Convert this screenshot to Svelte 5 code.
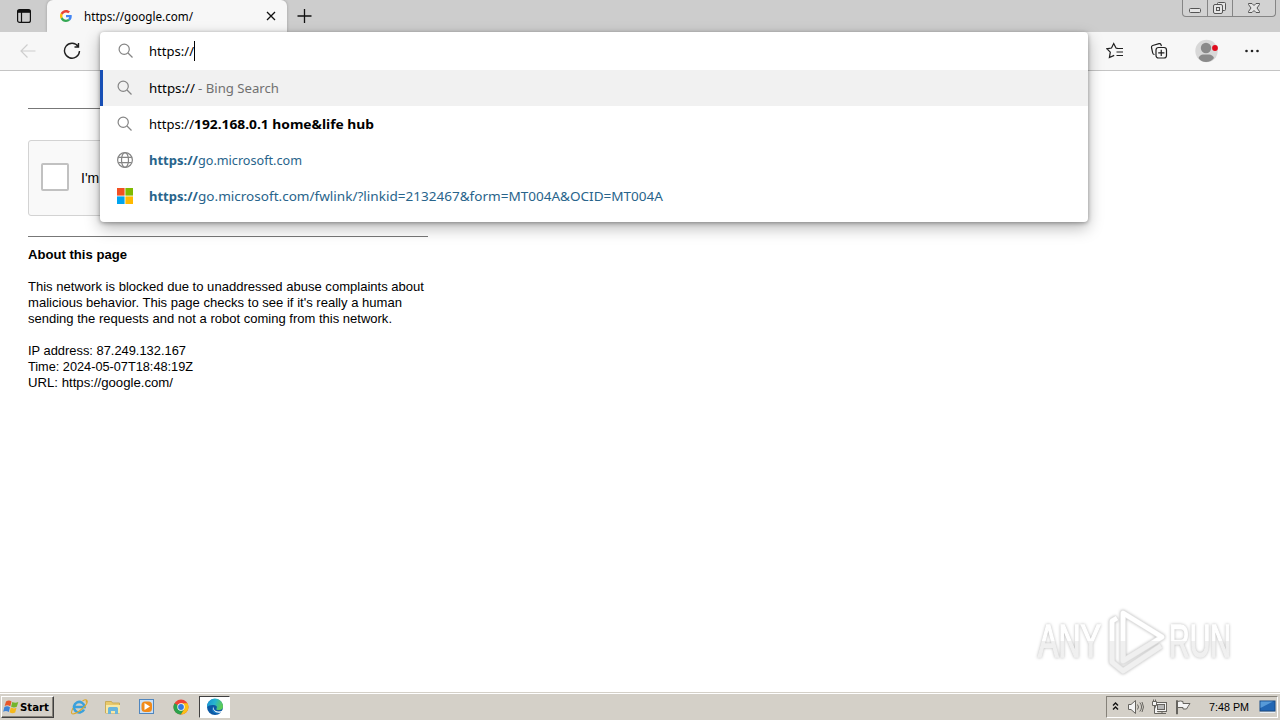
<script lang="ts">
	type Suggestion = {
		icon: 'search' | 'globe' | 'windows';
		kind: string;
		parts: { text: string; style: string; width: number }[];
	};

	const suggestions: Suggestion[] = [
		{
			icon: 'search',
			kind: 'selected',
			parts: [
				{ text: 'https://', style: 'plain', width: 46 },
				{ text: '- Bing Search', style: 'hint', width: 81 }
			]
		},
		{
			icon: 'search',
			kind: '',
			parts: [
				{ text: 'https://', style: 'plain', width: 45 },
				{ text: '192.168.0.1 home&life hub', style: 'strong', width: 180 }
			]
		},
		{
			icon: 'globe',
			kind: 'link',
			parts: [
				{ text: 'https://', style: 'strong', width: 49 },
				{ text: 'go.microsoft.com', style: 'plain', width: 104 }
			]
		},
		{
			icon: 'windows',
			kind: 'link',
			parts: [
				{ text: 'https://', style: 'strong', width: 49 },
				{
					text: 'go.microsoft.com/fwlink/?linkid=2132467&form=MT004A&OCID=MT004A',
					style: 'plain',
					width: 465
				}
			]
		}
	];
</script>

{#snippet label(text: string, width: number)}
	<svg class="label" {width} height="20">
		<text x="0" y="15" textLength={width} lengthAdjust="spacingAndGlyphs">{text}</text>
	</svg>
{/snippet}

{#snippet search()}
	<svg class="glyph" width="16" height="16" viewBox="0 0 16 16">
		<circle cx="6.2" cy="6.2" r="5.1" />
		<path d="m10 10 4.500 4.500" />
	</svg>
{/snippet}

<div class="screen">
	<header class="tabs">
		<svg class="tab-actions" width="16" height="16" viewBox="0 0 16 16">
			<rect x="1.6" y="1.6" width="12.8" height="12.8" rx="2" />
			<path d="M1.6 3.3h12.8" stroke-width="3" />
			<path d="M5.5 4v10" />
		</svg>
		<div class="tab">
			<svg width="12" height="12" viewBox="0 0 48 48">
				<path fill="#ea4335" d="M24 9.5c3.5 0 6.700 1.200 9.200 3.600l6.900-6.900C35.900 2.400 30.500 0 24 0 14.600 0 6.500 5.400 2.600 13.200l8 6.200C12.400 13.700 17.700 9.500 24 9.500z" />
				<path fill="#4285f4" d="M47 24.500c0-1.600-.2-3.100-.4-4.500H24v9h12.900c-.6 3-2.300 5.500-4.800 7.200l7.700 6C44.400 38 47 31.800 47 24.500z" />
				<path fill="#fbbc05" d="M10.500 28.600c-.5-1.500-.8-3-.8-4.600s.3-3.100.8-4.600l-8-6.200C.9 16.500 0 20.100 0 24s.9 7.500 2.600 10.800z" />
				<path fill="#34a853" d="M24 48c6.500 0 11.900-2.100 15.900-5.800l-7.700-6c-2.200 1.500-4.900 2.300-8.200 2.300-6.300 0-11.600-4.200-13.500-9.900l-8 6.200C6.500 42.600 14.600 48 24 48z" />
			</svg>
			<span class="tab-title">{@render label('https://google.com/', 109)}</span>
			<svg class="line" width="10" height="10" viewBox="0 0 10 10">
				<path d="m1 1 8 8M9 1 1 9" />
			</svg>
		</div>
		<svg class="line new-tab" width="16" height="16" viewBox="0 0 16 16">
			<path d="M7.500 1v14M.5 8h14" />
		</svg>
		<div class="window-buttons">
			<svg width="25" height="16" viewBox="0 0 25 16">
				<rect x="6.500" y="8.500" width="11" height="4" rx="1" />
			</svg>
			<svg width="25" height="16" viewBox="0 0 25 16">
				<path d="M9.500 4.500v-1q0-1 1-1h6q1 0 1 1v6q0 1-1 1h-2" />
				<rect x="5.500" y="4.500" width="9" height="9" rx="1.500" />
				<rect x="8.500" y="7.500" width="3" height="3" />
			</svg>
			<svg width="42" height="16" viewBox="0 0 42 16">
				<path d="M15.500 3.500h3.500l2 2 2-2h3.500v1L24 8l2.500 3.500v1H23l-2-2-2 2h-3.500v-1L18 8l-2.500-3.500z" />
			</svg>
		</div>
	</header>

	<nav class="toolbar">
		<svg class="back" width="16" height="16" viewBox="0 0 16 16">
			<path d="M15.500 8H1M7.500 1.500 1 8l6.500 6.500" />
		</svg>
		<svg class="reload" width="18" height="18" viewBox="0 0 18 18">
			<path d="M15.200 4.500A7.500 7.500 0 1 0 16.500 9M15.500 1v4h-4" />
		</svg>
		<div class="tools">
			<svg width="18" height="18" viewBox="0 0 18 18">
				<path d="M12 6.500 10 6 7.700 1.500 5.500 6l-4.700.8 3.500 3.300-.9 5.500 4.800-2.200M10.500 6.500H17M10.500 10H17M10.500 13.500H17" />
			</svg>
			<svg width="18" height="18" viewBox="0 0 18 18">
				<path d="M4.500 12.500Q3 12.500 2.700 11L1.500 5.500Q1.200 4 2.700 3.500L9 1.700q1.500-.4 2 1l.4 1.500" />
				<rect x="6" y="5.500" width="10.500" height="10.500" rx="2.500" />
				<path d="M11.250 7.700v6.200M8.200 10.800h6.200" />
			</svg>
			<svg class="avatar" width="24" height="24" viewBox="0 0 24 24">
				<circle cx="11.500" cy="12" r="11.200" fill="#d8d8d8" />
				<circle cx="11" cy="9" r="5.200" fill="#8a8a8a" />
				<path d="M3.500 19Q5 15.500 8 15.500h6Q17.500 15.500 19 19 16 23 11 23T3.500 19z" fill="#8a8a8a" />
				<circle cx="20" cy="9" r="2.900" fill="#e00b1c" />
			</svg>
			<svg class="dots" width="16" height="16" viewBox="0 0 16 16">
				<circle cx="2.500" cy="8" r="1.300" />
				<circle cx="8" cy="8" r="1.300" />
				<circle cx="13.500" cy="8" r="1.300" />
			</svg>
		</div>
	</nav>

	<main>
		<hr />
		<div class="captcha">
			<span class="box"></span>
			<span>I'm not a robot</span>
		</div>
		<hr />
		<div class="about">
			<b>{@render label('About this page', 99)}</b>
			<p>
				{@render label('This network is blocked due to unaddressed abuse complaints about', 396)}
				{@render label("malicious behavior. This page checks to see if it's really a human", 374)}
				{@render label('sending the requests and not a robot coming from this network.', 364)}
			</p>
			<p>
				{@render label('IP address: 87.249.132.167', 158)}
				{@render label('Time: 2024-05-07T18:48:19Z', 165)}
				{@render label('URL: https://google.com/', 145)}
			</p>
		</div>
	</main>

	<footer class="taskbar">
		<button class="start">
			<svg width="17" height="16" viewBox="0 0 17 16">
				<path fill="#e8562a" d="M3 2.500q3-2 5.500 0L7.300 7.300Q4.500 5.500 1.700 7z" />
				<path fill="#73b52c" d="M9.300 3q3 1.600 6 0l-1.500 4.700q-2.800 1.400-5.700 0z" />
				<path fill="#3d83d7" d="M1.400 8q2.900-1.600 5.600.3l-1.200 4.600Q3 11.300.2 12.700z" />
				<path fill="#f5b91c" d="M7.800 8.600q2.900 1.500 5.700.2L12.200 13.500q-2.900 1.500-5.600-.2z" />
			</svg>
			{@render label('Start', 29)}
		</button>
		<div class="launch">
			<svg width="18" height="18" viewBox="0 0 18 18">
				<path d="M14 11.500a5.300 5.300 0 1 1 .5-2.500H5" fill="none" stroke="#3ba1dc" stroke-width="2.600" />
				<path d="M12.500 3q5-3 3.500 1.500M3 10q-3 6 0 6 4-.5 10-6t3.500-8" fill="none" stroke="#dda92b" stroke-width="1.100" />
			</svg>
			<svg width="18" height="18" viewBox="0 0 18 18">
				<path d="M1.500 3.500h6l1 1.500h7V15h-14z" fill="#e9c96a" stroke="#c9ab58" />
				<path d="M2 7h14v8H2z" fill="#f7e8a5" />
				<path d="M4 16v-5.500q0-1.500 1.500-1.500h7q1.500 0 1.500 1.500V16h-3v-3H7v3z" fill="#69b5dc" />
			</svg>
			<svg width="18" height="18" viewBox="0 0 18 18">
				<rect x="1.500" y="1.500" width="14" height="14" fill="#c9e0f7" stroke="#5086be" />
				<rect x="3.500" y="3.500" width="10.500" height="10.500" rx="3.500" fill="#f18a19" />
				<path d="m6.500 5 5.500 3.500L6.500 12z" fill="#fff" />
			</svg>
			<svg width="18" height="18" viewBox="0 0 18 18">
				<circle cx="9" cy="9" r="7.500" fill="#ef4335" />
				<path d="M9 9 2.500 5.200A7.500 7.500 0 0 0 9 16.500l3.300-5.600z" fill="#2ba24c" />
				<path d="M9 5.300h6.500A7.500 7.500 0 0 1 9 16.500l3.300-5.600z" fill="#fbc116" />
				<circle cx="9" cy="9" r="3.700" fill="#fff" />
				<circle cx="9" cy="9" r="2.900" fill="#3479df" />
			</svg>
		</div>
		<div class="running">
			<svg width="18" height="18" viewBox="0 0 18 18">
				<defs>
					<linearGradient id="wave" x2="1" y2=".3">
						<stop offset="0" stop-color="#168fd5" />
						<stop offset=".55" stop-color="#27b6ce" />
						<stop offset="1" stop-color="#5ccc58" />
					</linearGradient>
				</defs>
				<circle cx="9" cy="9" r="8" fill="#0c59a4" />
				<path d="M1 9a8 8 0 0 1 16-1q.3 4-4 4-3.500 0-2.500-1.500Q12 7.500 8 7 3 6.500 1 9z" fill="url(#wave)" />
				<path d="M7 9q-1 6 9 4l-2 2Q8 17 6 12 5.500 10 7 9z" fill="#1479c6" />
				<path d="M8 8.500q-1 4.500 4 5 3 .2 4.500-1l1.500-1v2l-3 1q-5 1-7-2-1.500-2 0-4z" fill="#fff" />
			</svg>
		</div>
		<div class="tray">
			<svg width="9" height="12" viewBox="0 0 9 12">
				<path d="m1 4.500 2.500-2.500L6 4.500m-5 4L3.500 6 6 8.500" fill="none" stroke="#111" stroke-width="1.400" />
			</svg>
			<svg width="18" height="16" viewBox="0 0 18 16" class="tray-icon">
				<path d="M1.500 5.500H4L8.500 1.500v13L4 10.500H1.500z" />
				<path d="M10.500 5.500q2 2.500 0 5M12.800 3.500q3.500 4.500 0 9M15 3q3 5 0 10" fill="none" />
			</svg>
			<svg width="18" height="16" viewBox="0 0 18 16" class="tray-icon">
				<path d="M7 14.500h8M11 12v2" />
				<rect x="4.500" y="3.500" width="11" height="9" />
				<rect x="6.500" y="5.500" width="7" height="5" fill="#b8b8b8" />
				<path d="M1.500 2.500h4v4h-4zM2.500 .5v2M4.500 .5v2M3.500 6.500v8H7" />
			</svg>
			<svg width="18" height="16" viewBox="0 0 18 16" class="tray-icon">
				<path d="M1.500 15V1.500h1V15zM2.500 2.500q3-1 5.500 0v2h7l-2 3-1.500 2.500H8V8.500H2.500z" />
			</svg>
			<span class="clock">{@render label('7:48 PM', 40)}</span>
			<svg width="17" height="14" viewBox="0 0 17 14">
				<rect x="1" y="1" width="15" height="10" fill="#2367b4" stroke="#174a86" />
				<path d="M1.500 8 14 1.500H1.500z" fill="#579ad8" />
				<path d="M1 12.500h15" stroke="#e6edf4" />
			</svg>
		</div>
	</footer>

	<section class="omnibox">
		<div class="query">
			{@render search()}
			<span class="typed">{@render label('https://', 45)}</span>
		</div>
		{#each suggestions as item}
			<div class="suggestion {item.kind}">
				{#if item.icon === 'search'}
					{@render search()}
				{:else if item.icon === 'globe'}
					<svg class="glyph" width="16" height="16" viewBox="0 0 16 16">
						<circle cx="8" cy="8" r="7.400" />
						<ellipse cx="8" cy="8" rx="3.500" ry="7.400" />
						<path d="M1.300 5.300h13.400M1.300 10.700h13.400" />
					</svg>
				{:else}
					<svg width="16" height="16" viewBox="0 0 16 16">
						<path fill="#f25022" d="M0 0h7.600v7.600H0z" />
						<path fill="#7fba00" d="M8.400 0H16v7.600H8.400z" />
						<path fill="#00a4ef" d="M0 8.400h7.600V16H0z" />
						<path fill="#ffb900" d="M8.400 8.400H16V16H8.400z" />
					</svg>
				{/if}
				<div class="text">
					{#each item.parts as part}
						<span class={part.style}>{@render label(part.text, part.width)}</span>
					{/each}
				</div>
			</div>
		{/each}
	</section>

	<svg class="watermark" width="220" height="74" viewBox="0 0 220 74">
		<defs>
			<linearGradient id="fade" gradientUnits="userSpaceOnUse" x1="0" y1="0" x2="0" y2="70">
				<stop offset=".5" stop-color="#fff" />
				<stop offset=".5" stop-color="#f0f0f0" />
			</linearGradient>
		</defs>
		<text x="8" y="51" textLength="63" lengthAdjust="spacingAndGlyphs">ANY</text>
		<g class="mark">
			<path d="M87 12l-5 3v41l11 9 38-25" />
			<path d="M93 7v48l39-24z" />
		</g>
		<g class="mark core">
			<path d="M87 12l-5 3v41l11 9 38-25" />
			<path d="M93 7v48l39-24z" />
		</g>
		<text x="139" y="51" textLength="62" lengthAdjust="spacingAndGlyphs">RUN</text>
	</svg>
</div>

<style>
	:global(body) {
		margin: 0;
		overflow: hidden;
	}

	.screen {
		position: relative;
		display: flex;
		flex-direction: column;
		width: 1280px;
		height: 720px;
		overflow: hidden;
		background: #fff;
		font: 13px 'Noto Sans', sans-serif;
		color: #000;
	}

	svg {
		flex: none;
		fill: none;
	}

	.label {
		display: block;
		overflow: visible;
		fill: currentColor;
		stroke: none;
	}

	.tabs {
		display: flex;
		align-items: center;
		flex: none;
		height: 32px;
		background: #cdcdcd;
	}

	.tab-actions {
		margin: 0 15px 0 16px;
		stroke: #111;
		stroke-width: 1.2;
	}

	.tab {
		display: flex;
		align-items: center;
		box-sizing: border-box;
		width: 240px;
		height: 32px;
		padding: 0 11px 0 13px;
		border-radius: 6px 6px 0 0;
		background: #f7f7f7;
		box-shadow: 0 0 3px rgba(0, 0, 0, 0.25);
	}

	.tab-title {
		flex: 1;
		margin: -1px 0 0 12px;
		font-size: 12px;
	}

	.line {
		stroke: #111;
		stroke-width: 1.3;
	}

	.new-tab {
		margin-left: 10px;
	}

	.window-buttons {
		display: flex;
		align-self: flex-start;
		margin: 0 4px 0 auto;
		border: 1px solid #858585;
		border-top: 0;
		border-radius: 0 0 4px 4px;
		background: #d2d2d2;
		stroke: #555;
	}

	.window-buttons svg + svg {
		border-left: 1px solid #858585;
		margin-left: -1px;
	}

	.window-buttons svg {
		fill: #e5e5e5;
	}

	.toolbar {
		display: flex;
		align-items: center;
		box-sizing: border-box;
		flex: none;
		height: 39px;
		padding: 0 20px;
		border-bottom: 1px solid #c4c4c4;
		background: #f7f7f7;
		stroke: #202020;
		stroke-width: 1.2;
	}

	.back {
		stroke: #cecece;
	}

	.reload {
		margin-left: 27px;
		stroke-width: 1.4;
	}

	.tools {
		display: flex;
		align-items: center;
		gap: 26px;
		margin-left: auto;
	}

	.avatar {
		margin-left: 1px;
		stroke: none;
	}

	.dots {
		margin-left: -1px;
		fill: #222;
		stroke: none;
	}

	main {
		flex: 1;
		width: 400px;
		padding: 37px 0 0 28px;
		font-family: 'Liberation Sans', sans-serif;
	}

	hr {
		height: 1px;
		margin: 0;
		border: 0;
		background: #777;
	}

	.captcha {
		display: flex;
		align-items: center;
		box-sizing: border-box;
		gap: 12px;
		width: 304px;
		height: 76px;
		margin: 31px 0 20px;
		padding: 0 0 2px 12px;
		border: 1px solid #d3d3d3;
		border-radius: 3px;
		background: #f9f9f9;
		font-size: 14px;
	}

	.captcha span:last-child {
		margin-top: 2px;
	}

	.box {
		box-sizing: border-box;
		width: 28px;
		height: 28px;
		border: 2px solid #c1c1c1;
		border-radius: 2px;
		background: #fff;
	}

	.about {
		padding-top: 7px;
	}

	.about :global(.label) {
		height: 16px;
	}

	p {
		margin: 16px 0;
	}

	.taskbar {
		display: flex;
		align-items: center;
		box-sizing: border-box;
		flex: none;
		height: 28px;
		padding: 0 2px 0 1px;
		border-top: 1px solid #d4d0c8;
		box-shadow: inset 0 1px #fff;
		background: #d4d0c8;
		font-family: 'Liberation Sans', sans-serif;
		font-size: 11px;
	}

	.start {
		display: flex;
		align-items: center;
		box-sizing: border-box;
		width: 53px;
		height: 22px;
		padding: 0 2px 0 1px;
		border: 1px solid;
		border-color: #fff #404040 #404040 #fff;
		box-shadow: inset -1px -1px #858179;
		background: #d4d0c8;
		font: bold 11px 'DejaVu Sans', sans-serif;
		color: #000;
	}

	.start :global(.label) {
		height: 22px;
	}

	.launch {
		display: flex;
		gap: 16px;
		margin-left: 16px;
	}

	.running {
		display: flex;
		align-items: center;
		justify-content: center;
		box-sizing: border-box;
		width: 31px;
		height: 22px;
		margin-left: 9px;
		border: 1px solid;
		border-color: #404040 #fff #fff #404040;
		background: #fff;
	}

	.tray {
		display: flex;
		align-items: center;
		box-sizing: border-box;
		gap: 6px;
		width: 172px;
		height: 22px;
		margin-left: auto;
		padding: 0 1px 0 5px;
		border: 1px solid;
		border-color: #858179 #fff #fff #858179;
	}

	.tray-icon {
		fill: #f4f4f4;
		stroke: #66645f;
	}

	.clock {
		margin: -1px 4px 0 10px;
	}

	.omnibox {
		position: absolute;
		left: 100px;
		top: 32px;
		width: 988px;
		height: 190px;
		border-radius: 4px;
		background: #fff;
		box-shadow:
			0 6px 16px rgba(0, 0, 0, 0.28),
			0 1px 4px rgba(0, 0, 0, 0.35);
	}

	.query,
	.suggestion {
		display: flex;
		align-items: center;
		box-sizing: border-box;
		gap: 16px;
		height: 36px;
		padding-left: 17px;
	}

	.query {
		height: 38px;
		padding-left: 18px;
		gap: 15px;
	}

	.typed {
		border-right: 1px solid #000;
	}

	.selected {
		padding-left: 14px;
		border-left: 3px solid #174fb5;
		background: #f1f1f1;
	}

	.glyph {
		stroke: #858585;
		stroke-width: 1.2;
	}

	.text {
		display: flex;
	}

	.hint {
		margin-left: 3px;
		color: #707070;
	}

	.strong {
		font-weight: 700;
	}

	.link {
		color: #28648b;
	}

	.watermark {
		position: absolute;
		left: 1030px;
		top: 606px;
		overflow: visible;
		fill: url(#fade);
		stroke: url(#fade);
		stroke-width: 1.4;
		filter: drop-shadow(0 0 1.5px rgba(0, 0, 0, 0.28));
		font: 46px 'Liberation Sans Narrow', 'Liberation Sans', sans-serif;
	}

	.mark {
		fill: none;
		stroke: #e4e4e4;
		stroke-width: 6;
		stroke-linejoin: round;
	}

	.core {
		stroke: url(#fade);
		stroke-width: 4.5;
	}
</style>
